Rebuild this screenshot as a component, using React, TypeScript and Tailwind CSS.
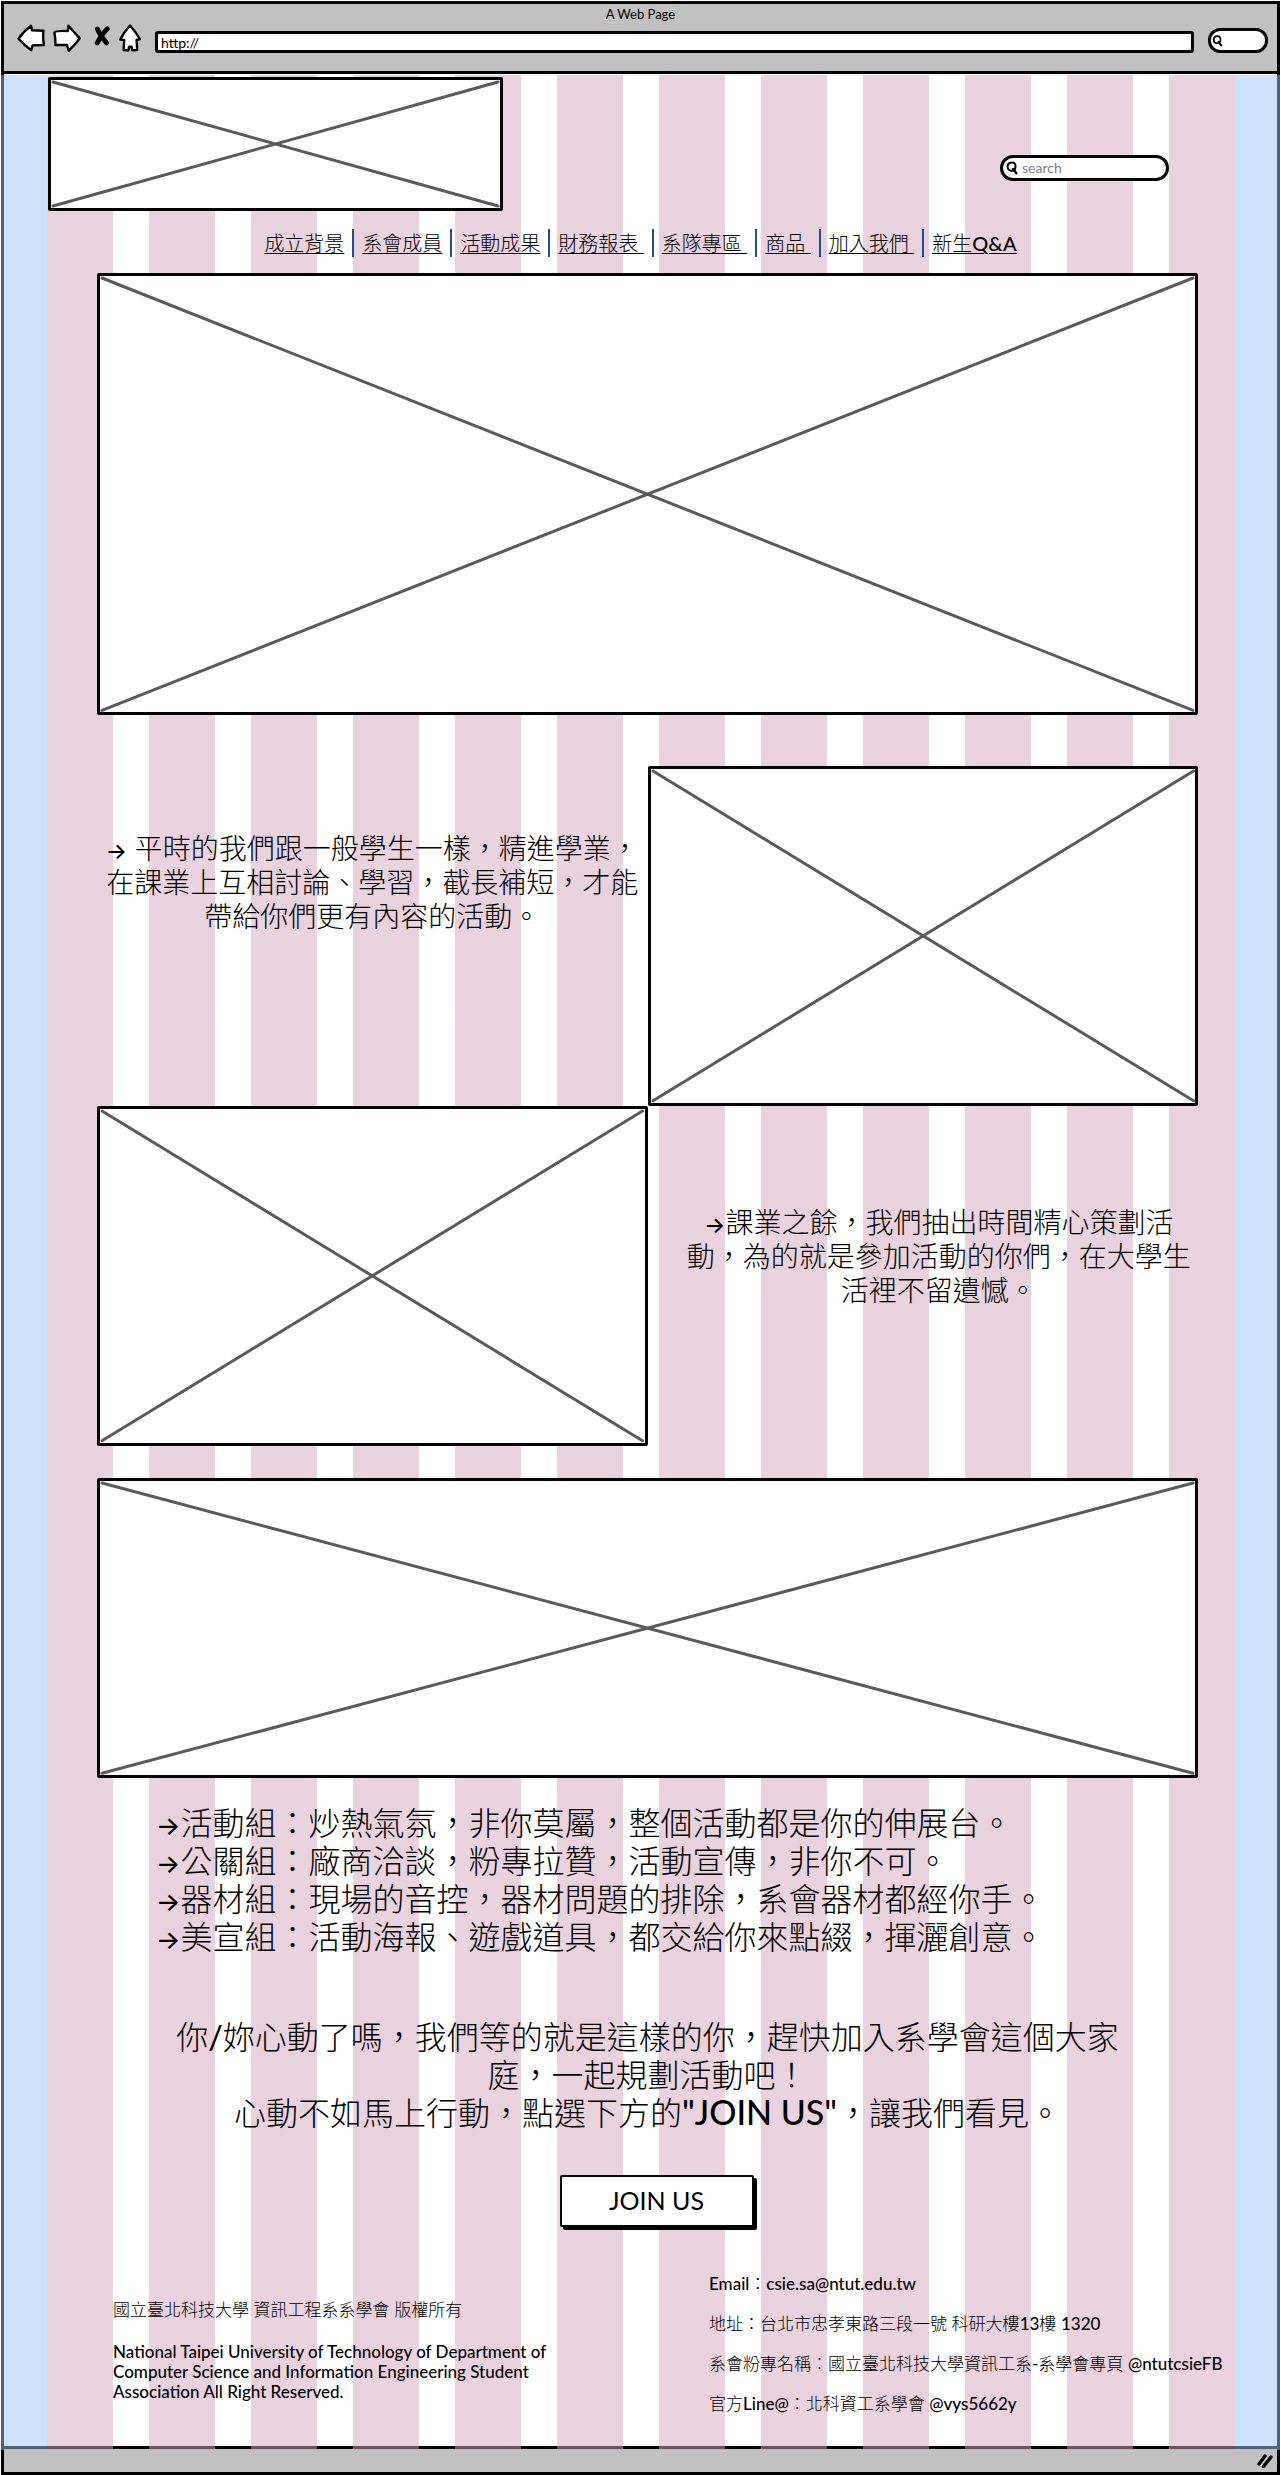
import type { ReactNode } from 'react';

const navItems = ['成立背景', '系會成員', '活動成果', '財務報表 ', '系隊專區 ', '商品 ', '加入我們 ', '新生Q&A'];

const groups = [
  '活動組：炒熱氣氛，非你莫屬，整個活動都是你的伸展台。',
  '公關組：廠商洽談，粉專拉贊，活動宣傳，非你不可。',
  '器材組：現場的音控，器材問題的排除，系會器材都經你手。',
  '美宣組：活動海報、遊戲道具，都交給你來點綴，揮灑創意。',
];

const contacts = [
  'Email：csie.sa@ntut.edu.tw',
  '地址：台北市忠孝東路三段一號 科研大樓13樓 1320',
  '系會粉專名稱：國立臺北科技大學資訊工系-系學會專頁 @ntutcsieFB',
  '官方Line@：北科資工系學會 @vys5662y',
];

function Placeholder({ label, className }: { label: string; className: string }) {
  return (
    <div role="img" aria-label={label} className={`rounded-[2px] border-[3px] border-black bg-white p-[2px] ${className}`}>
      <svg className="block h-full w-full overflow-visible" viewBox="0 0 100 100" preserveAspectRatio="none" fill="none" stroke="#5a5a5a" strokeWidth="3" strokeLinecap="round">
        <path d="M0 0 L100 100 M100 0 L0 100" vectorEffect="non-scaling-stroke" />
      </svg>
    </div>
  );
}

function Magnifier({ className }: { className: string }) {
  return (
    <svg className={className} viewBox="0 0 12 14" fill="none" stroke="#000" strokeWidth="2" strokeLinecap="round" aria-hidden="true">
      <path d="M5.6 1.4 C8.4 1.2 9.6 3 9.5 5.6 C9.4 8.2 7.8 9.8 5.2 9.7 C2.6 9.5 1.5 7.8 1.6 5.4 C1.7 3 3.2 1.5 5.6 1.4 Z" />
      <path d="M7 8 L10.4 12.2" strokeWidth="2.4" />
    </svg>
  );
}

function ChromeButton({ label, className, children }: { label: string; className: string; children: ReactNode }) {
  return (
    <button type="button" aria-label={label} className={`shrink-0 ${className}`}>
      {children}
    </button>
  );
}

/* Light Chinese text with heavier Latin runs. */
function Mixed({ text }: { text: string }) {
  return text.split(/([\x21-\x7e]+)/).map((run, i) =>
    i % 2 === 1 ? (
      <span key={i} className="font-medium">
        {run}
      </span>
    ) : (
      run
    ),
  );
}

function Arrow() {
  return <span className="font-['Inter'] text-[0.8em] font-medium leading-none">→</span>;
}

function BrowserBar() {
  return (
    <header className="flex h-[73px] flex-col border-y-[3px] border-black bg-[#c1c1c1]">
      <h1 className="text-center text-[13px] leading-5">A Web Page</h1>
      <div className="flex items-start pl-[13px] pr-[9px]">
        <ChromeButton label="Back" className="mr-2 h-7 w-7">
          <svg viewBox="0 0 28 28" fill="#fff" stroke="#000" strokeWidth="2.4" strokeLinejoin="round">
            <path d="M1.5 14.8 Q6 8 14 1.8 L15 6.2 L26.5 6.8 Q25.6 14 27 21 L15.6 21.4 L14.2 26.2 Q7 21 1.5 14.8 Z" />
          </svg>
        </ChromeButton>
        <ChromeButton label="Forward" className="mr-3 h-7 w-7">
          <svg viewBox="0 0 28 28" fill="#fff" stroke="#000" strokeWidth="2.4" strokeLinejoin="round">
            <path d="M1.4 8.6 Q2 6.6 15 7 L15.4 1.8 Q20 7 26.8 14.4 Q22 21 15.6 26.8 L14 21 L2.4 21 Q2.6 15 1.4 8.6 Z" />
          </svg>
        </ChromeButton>
        <ChromeButton label="Stop" className="mr-2 h-7 w-[18px]">
          <svg viewBox="0 0 18 28" fill="none" stroke="#000" strokeWidth="4.8" strokeLinecap="round">
            <path d="M4.4 5 Q7 11 13.6 19 M14.4 4.8 Q9 10 4.2 19" />
          </svg>
        </ChromeButton>
        <ChromeButton label="Home" className="mr-[14px] h-7 w-[22px]">
          <svg viewBox="0 0 22 28" fill="#fff" stroke="#000" strokeWidth="2.4" strokeLinejoin="round">
            <path d="M11 1.5 Q17 8 20.8 15 L17.6 16 L18.2 26 L13.4 26.2 L12.4 22.6 L10.2 22.6 L9.4 26.4 L4.6 26 L5.2 16 L1.2 15.6 Q5 8 11 1.5 Z" />
          </svg>
        </ChromeButton>
        <input
          aria-label="Address"
          defaultValue="http://"
          className="mt-[7px] h-[22px] min-w-0 flex-1 rounded-[3px] border-[3px] border-black bg-white px-[3px] text-[14px] leading-4 outline-none"
        />
        <label className="ml-[14px] mt-1 flex h-[25px] w-[60px] shrink-0 items-center rounded-[12px] border-[3px] border-black bg-white">
          <Magnifier className="ml-px h-3 w-[11px] shrink-0" />
          <input aria-label="Web search" className="min-w-0 flex-1 bg-transparent text-[14px] outline-none" />
        </label>
      </div>
    </header>
  );
}

export default function App() {
  return (
    <div className="bg-white px-[1px] pt-[1px] font-['Lato','Noto_Sans_CJK_TC',sans-serif] text-black">
      <div className="border-x-[3px] border-b-[3px] border-black">
        <BrowserBar />

        <div className="relative">
          <div aria-hidden="true" className="absolute -inset-x-[3px] -bottom-1 top-px z-10 flex">
            <div className="w-[46px] bg-[#9bc3f5]/50" />
            <div className="flex-1 bg-[repeating-linear-gradient(90deg,#d5a5bf80_0_66px,transparent_66px_102px)]" />
            <div className="w-[45px] bg-[#9bc3f5]/50" />
          </div>

          <div className="relative z-20 font-light">
            <div className="flex items-start justify-between pl-[44px] pr-[108px] pt-[3px]">
              <Placeholder label="Logo" className="aspect-[455/134] w-[455px]" />
              <label className="mt-[78px] flex h-[26px] w-[169px] items-center rounded-[13px] border-[3px] border-black bg-white pl-[3px]">
                <Magnifier className="h-[14px] w-3 shrink-0" />
                <input
                  aria-label="Search"
                  placeholder="search"
                  className="min-w-0 flex-1 bg-transparent pl-1 text-[14px] font-normal leading-4 outline-none placeholder:text-[#80808c]"
                />
              </label>
            </div>

            <nav aria-label="Main" className="mt-[18px] flex justify-center text-[20px] leading-7">
              {navItems.map((item, i) => (
                <div key={item} className="flex">
                  {i > 0 && <span aria-hidden="true" className="mx-2 w-[2px] bg-[#1f4e9a]" />}
                  <a href="#" className="whitespace-pre underline decoration-1 underline-offset-2">
                    <Mixed text={item} />
                  </a>
                </div>
              ))}
            </nav>

            <main className="pl-[93px] pr-[79px] pt-4">
              <Placeholder label="Banner" className="aspect-[1100/442] w-full" />

              <section className="mt-[51px] grid grid-cols-2 text-[28px] leading-[34px]">
                <p className="pt-[65px] text-center">
                  <Arrow /> 平時的我們跟一般學生一樣，精進學業，
                  <br />
                  在課業上互相討論、學習，截長補短，才能
                  <br />
                  帶給你們更有內容的活動。
                </p>
                <Placeholder label="Study photo" className="aspect-[551/340] w-full" />
                <Placeholder label="Event photo" className="aspect-[551/340] w-full" />
                <p className="pl-8 pt-[99px] text-center">
                  <Arrow />
                  課業之餘，我們抽出時間精心策劃活
                  <br />
                  動，為的就是參加活動的你們，在大學生
                  <br />
                  活裡不留遺憾。
                </p>
              </section>

              <Placeholder label="Group photo" className="mt-8 aspect-[1100/300] w-full" />

              <ul className="pl-[59px] pt-[26px] text-[32px] leading-[38px]">
                {groups.map((text) => (
                  <li key={text}>
                    <Arrow />
                    {text}
                  </li>
                ))}
              </ul>

              <p className="mt-[62px] text-center text-[32px] leading-[38px]">
                你<span className="font-medium">/</span>妳心動了嗎，我們等的就是這樣的你，趕快加入系學會這個大家
                <br />
                庭，一起規劃活動吧！
                <br />
                心動不如馬上行動，點選下方的<span className="text-[34px] font-medium leading-none">"JOIN US"</span>，讓我們看見。
              </p>
            </main>

            <div className="mt-[43px] flex justify-center pl-8">
              <button type="button" className="h-[52px] w-[194px] rounded-[2px] border-2 border-black bg-white text-[25px] font-normal shadow-[3px_3px_0_#000]">
                JOIN US
              </button>
            </div>

            <footer className="mt-[37px] flex text-[17px] leading-5">
              <div className="w-[705px] shrink-0 pl-[109px] pt-9">
                <p>國立臺北科技大學 資訊工程系系學會 版權所有</p>
                <p className="mt-[22px] w-[460px] font-medium">
                  National Taipei University of Technology of Department of Computer Science and Information Engineering Student
                  Association All Right Reserved.
                </p>
              </div>
              <ul className="flex-1 space-y-5 whitespace-nowrap pb-8 pt-[10px]">
                {contacts.map((line) => (
                  <li key={line}>
                    <Mixed text={line} />
                  </li>
                ))}
              </ul>
            </footer>
          </div>
        </div>

        <div className="flex h-[26px] items-center justify-end border-t-[3px] border-black bg-[#c1c1c1]">
          <svg className="mr-1 h-4 w-4" viewBox="0 0 16 16" stroke="#000" strokeWidth="3.4" strokeLinecap="round" aria-hidden="true">
            <path d="M2 11 L8 3 M6.5 13.5 L14 4" />
          </svg>
        </div>
      </div>
    </div>
  );
}
